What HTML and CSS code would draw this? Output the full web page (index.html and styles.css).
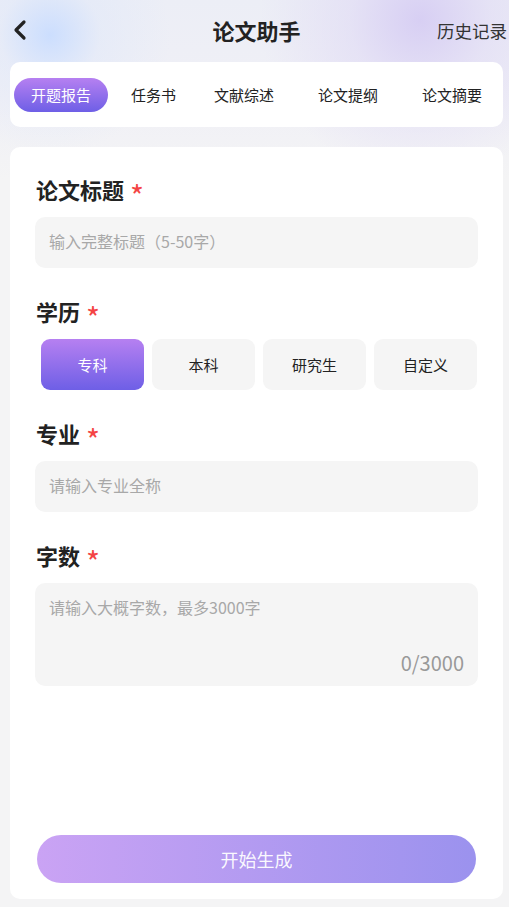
FILE: index.html
```html
<!DOCTYPE html>
<html lang="zh-CN">

<head>
    <meta charset="UTF-8">
    <meta name="viewport" content="width=device-width, initial-scale=1.0">
    <title>论文助手</title>
    <link rel="stylesheet" href="styles.css">
</head>

<body>
    <div class="page">
        <div class="header">
            <a class="back" href="#">
                <svg width="16" height="22" viewBox="0 0 16 22">
                    <path d="M12 3 L4 11 L12 19" fill="none" stroke="#222" stroke-width="3.2" stroke-linecap="round" stroke-linejoin="round" />
                </svg>
            </a>
            <div class="title">论文助手</div>
            <a class="history" href="#">历史记录</a>
        </div>

        <ul class="tabs">
            <li class="active">开题报告</li>
            <li>任务书</li>
            <li>文献综述</li>
            <li>论文提纲</li>
            <li>论文摘要</li>
        </ul>

        <div class="form-card">
            <div class="label">论文标题<span class="req">*</span></div>
            <div class="input">输入完整标题（5-50字）</div>

            <div class="label">学历<span class="req">*</span></div>
            <div class="options">
                <div class="option active">专科</div>
                <div class="option">本科</div>
                <div class="option">研究生</div>
                <div class="option">自定义</div>
            </div>

            <div class="label">专业<span class="req">*</span></div>
            <div class="input">请输入专业全称</div>

            <div class="label">字数<span class="req">*</span></div>
            <div class="textarea">
                <div class="placeholder">请输入大概字数，最多3000字</div>
                <div class="counter">0/3000</div>
            </div>

            <div class="submit">开始生成</div>
        </div>
    </div>
</body>

</html>
```

FILE: styles.css
```css
html,
body {
    margin: 0;
    padding: 0;
}

body {
    font-family: "Noto Sans CJK SC", "Noto Sans", sans-serif;
    color: #222;
    background-color: #f4f4f5;
    background-image:
        radial-gradient(circle at 50px 35px, rgba(200, 220, 255, 0.9) 0, rgba(220, 230, 250, 0.4) 50px, rgba(238, 240, 248, 0) 120px),
        radial-gradient(circle at 420px 20px, rgba(214, 205, 243, 0.95) 0, rgba(224, 218, 245, 0.6) 70px, rgba(238, 236, 248, 0) 160px),
        linear-gradient(180deg, #eceef6 0, #f0f0f6 100px, #f4f4f5 180px);
    background-repeat: no-repeat;
}

.page {
    min-height: 907px;
    display: flex;
    flex-direction: column;
    box-sizing: border-box;
    padding: 0 6px 8px 10px;
}

/* top bar */
.header {
    height: 62px;
    display: flex;
    align-items: center;
    justify-content: space-between;
    position: relative;
}

.back {
    display: flex;
    margin-left: 2px;
    margin-top: -2px;
}

.title {
    position: absolute;
    left: 0;
    right: 0;
    text-align: center;
    font-size: 22px;
    font-weight: 700;
    color: #222;
    margin-top: -2px;
    pointer-events: none;
}

.history {
    font-size: 17.5px;
    color: #333;
    text-decoration: none;
    margin-right: -4px;
    margin-top: -2px;
}

/* tabs */
ul.tabs {
    list-style-type: none;
    margin: 0;
    padding: 16px 4px 15px;
    background-color: #fff;
    border-radius: 10px;
    display: flex;
    justify-content: space-between;
}

ul.tabs li {
    padding: 0 17px;
    height: 34px;
    line-height: 34px;
    font-size: 15px;
    color: #222;
    border-radius: 17px;
    white-space: nowrap;
}

ul.tabs li:nth-child(2) {
    margin-left: -4px;
}

ul.tabs li:nth-child(3) {
    margin-left: -6px;
}

ul.tabs li.active {
    color: #fff;
    background: linear-gradient(180deg, #b680f1, #6e5fe6);
}

/* form */
.form-card {
    flex: 1;
    margin-top: 20px;
    background-color: #fff;
    border-radius: 10px;
    padding: 27px 25px 16px 25px;
    display: flex;
    flex-direction: column;
}

.label {
    font-size: 22px;
    font-weight: 700;
    line-height: 30px;
    height: 30px;
    color: #222;
    margin-left: 1px;
    margin-bottom: 13px;
}

.req {
    display: inline-block;
    color: #f44444;
    font-weight: 400;
    font-size: 30px;
    line-height: 1;
    vertical-align: -9px;
    margin-left: 6px;
}

.input {
    height: 51px;
    line-height: 49px;
    background-color: #f5f5f5;
    border-radius: 10px;
    padding: 0 14px;
    font-size: 16px;
    color: #a8a8a8;
    margin-bottom: 28px;
}

.options {
    display: grid;
    grid-template-columns: repeat(4, 1fr);
    gap: 8px;
    margin: 0 1px 28px 6px;
}

.option {
    height: 51px;
    line-height: 51px;
    text-align: center;
    font-size: 15px;
    color: #222;
    background-color: #f5f5f5;
    border-radius: 9px;
}

.option.active {
    color: #fff;
    background: linear-gradient(180deg, #b680f1, #6e5fe6);
}

.textarea {
    height: 103px;
    box-sizing: border-box;
    background-color: #f5f5f5;
    border-radius: 10px;
    padding: 12px 14px 10px;
    display: flex;
    flex-direction: column;
    justify-content: space-between;
}

.placeholder {
    font-size: 16px;
    line-height: 24px;
    color: #a8a8a8;
}

.counter {
    align-self: flex-end;
    font-size: 20px;
    line-height: 26px;
    color: #999;
}

.submit {
    margin-top: auto;
    margin-left: 2px;
    margin-right: 2px;
    height: 48px;
    line-height: 48px;
    text-align: center;
    border-radius: 24px;
    font-size: 18px;
    color: rgba(255, 255, 255, 0.95);
    background: linear-gradient(90deg, #caa3f4, #9b92ee);
}
```
